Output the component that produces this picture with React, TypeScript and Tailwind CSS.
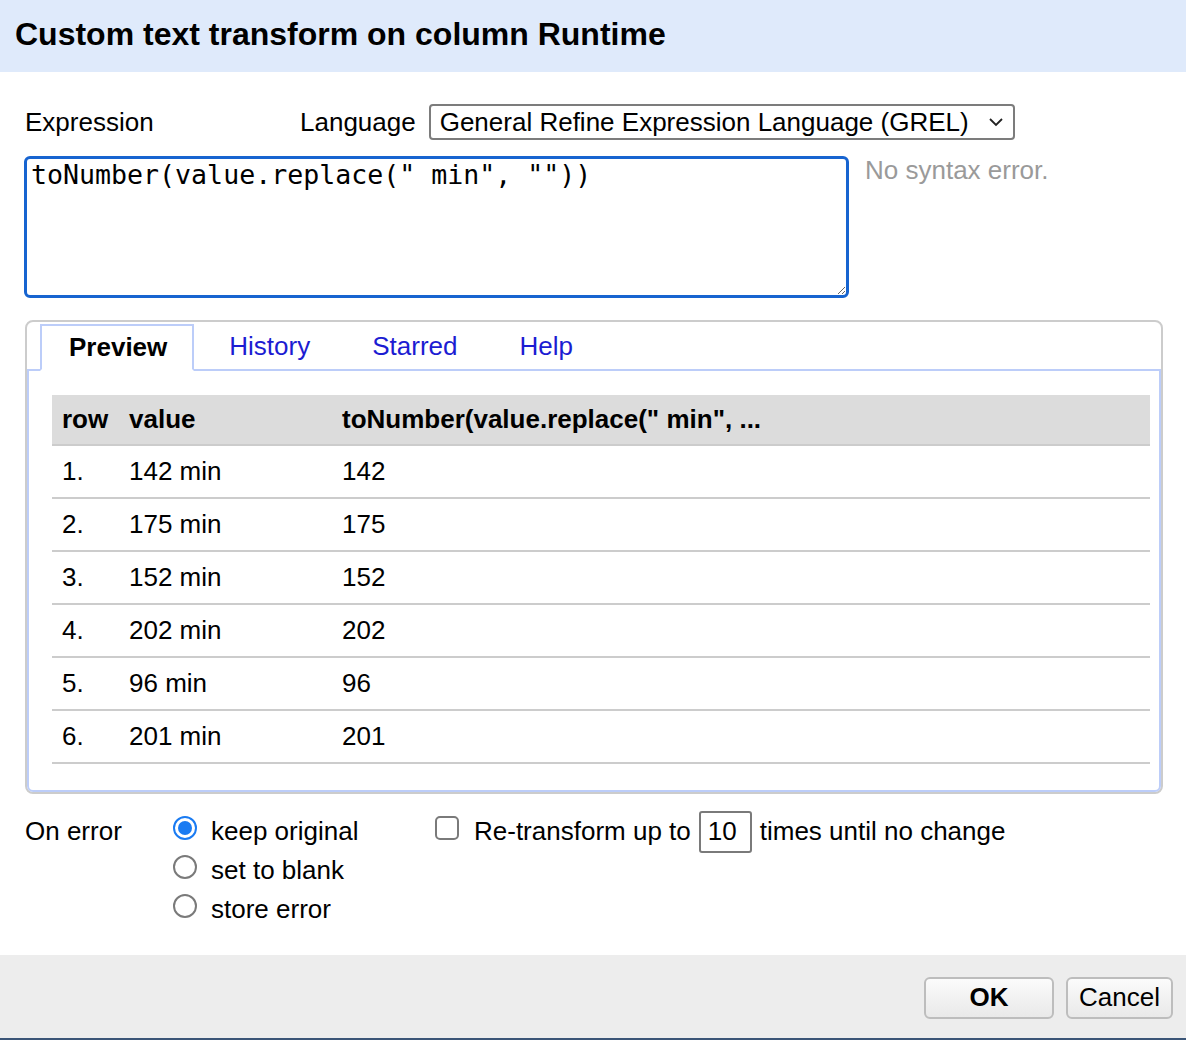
import React from "react";

const rows = [
  ["1.", "142 min", "142"],
  ["2.", "175 min", "175"],
  ["3.", "152 min", "152"],
  ["4.", "202 min", "202"],
  ["5.", "96 min", "96"],
  ["6.", "201 min", "201"],
];

function Radio({ checked }: { checked?: boolean }) {
  return checked ? (
    <div className="w-[24px] h-[24px] rounded-full border-[2px] border-[#1a7bf2] bg-white flex items-center justify-center shrink-0">
      <div className="w-[14px] h-[14px] rounded-full bg-[#1a7bf2]" />
    </div>
  ) : (
    <div className="w-[24px] h-[24px] rounded-full border-[2px] border-[#7a7a7a] bg-white shrink-0" />
  );
}

export default function App() {
  return (
    <div className="w-[1186px] h-[1040px] flex flex-col bg-white text-black font-['Liberation_Sans',Arial,sans-serif] text-[26px]">
      <div className="h-[72px] bg-[#dfeafb] flex items-center px-[15px] pb-[4px]">
        <h1 className="font-bold text-[32px] leading-none">Custom text transform on column Runtime</h1>
      </div>

      <div className="flex-1 flex flex-col px-[25px] pt-[32px]">
        <div className="flex items-center h-[36px]">
          <div className="w-[275px]">Expression</div>
          <div className="mr-[13px]">Language</div>
          <div className="w-[586px] h-[36px] border-[2px] border-[#7c7c7c] rounded-[4px] flex items-center pl-[9px] pr-[8px] justify-between">
            <span>General Refine Expression Language (GREL)</span>
            <svg width="18" height="12" viewBox="0 0 18 12" className="shrink-0">
              <path d="M3 3 L9 9 L15 3" stroke="#222" strokeWidth="1.8" fill="none" />
            </svg>
          </div>
        </div>

        <div className="flex mt-[16px]">
          <textarea
            readOnly
            value={'toNumber(value.replace(" min", ""))'}
            className="-ml-px w-[825px] h-[142px] border-[3px] border-[#1764d0] rounded-[6px] outline-none pl-[4px] pr-[5px] py-[1px] font-['DejaVu_Sans_Mono',monospace] text-[26.6px] leading-[30px] resize"
          />
          <div className="ml-[16px] -mt-[1px] text-[#9a9a9a] leading-[30px]">No syntax error.</div>
        </div>

        <div className="mt-[22px] w-[1138px] border-[2px] border-[#cccccc] rounded-[8px] flex flex-col">
          <div className="flex items-end pl-[13px] gap-[6px] h-[47px] relative z-10">
            <div className="h-[47px] -mb-[2px] border-[2px] border-[#bccdf9] border-b-white bg-white pl-[27px] pr-[25px] flex items-center font-bold">Preview</div>
            <div className="h-[45px] pl-[29px] pr-[27px] flex items-center text-[#1c1cd2]">History</div>
            <div className="h-[45px] pl-[29px] pr-[27px] flex items-center text-[#1c1cd2]">Starred</div>
            <div className="h-[45px] pl-[29px] pr-[27px] flex items-center text-[#1c1cd2]">Help</div>
          </div>
          <div className="border-[2px] border-[#bccdf9] rounded-b-[6px] pl-[23px] pr-[9px] pt-[24px] pb-[26px]">
            <table className="w-full border-collapse">
              <thead>
                <tr className="bg-[#dcdcdc] h-[50px] border-b-[2px] border-[#cccccc]">
                  <th className="w-[67px] text-left font-bold pl-[10px]">row</th>
                  <th className="w-[213px] text-left font-bold pl-[10px]">value</th>
                  <th className="text-left font-bold pl-[10px]">toNumber(value.replace(" min", ...</th>
                </tr>
              </thead>
              <tbody>
                {rows.map((r) => (
                  <tr key={r[0]} className="h-[53px] border-b-[2px] border-[#cccccc]">
                    <td className="pl-[10px]">{r[0]}</td>
                    <td className="pl-[10px]">{r[1]}</td>
                    <td className="pl-[10px]">{r[2]}</td>
                  </tr>
                ))}
              </tbody>
            </table>
          </div>
        </div>

        <div className="flex mt-[18px]">
          <div className="w-[148px] h-[39px] flex items-center">On error</div>
          <div className="w-[262px] flex flex-col">
            <div className="h-[39px] flex items-center gap-[14px]">
              <div className="-mt-[8px]"><Radio checked /></div>
              <span>keep original</span>
            </div>
            <div className="h-[39px] flex items-center gap-[14px]">
              <div className="-mt-[8px]"><Radio /></div>
              <span>set to blank</span>
            </div>
            <div className="h-[39px] flex items-center gap-[14px]">
              <div className="-mt-[8px]"><Radio /></div>
              <span>store error</span>
            </div>
          </div>
          <div className="h-[39px] flex items-center">
            <div className="w-[24px] h-[24px] border-[2px] border-[#7a7a7a] rounded-[5px] -mt-[8px] mr-[15px] shrink-0" />
            <span>Re-transform up to</span>
            <div className="ml-[8px] mr-[8px] w-[53px] h-[42px] border-[2px] border-[#7a7a7a] rounded-[3px] flex items-center pl-[7px]">10</div>
            <span>times until no change</span>
          </div>
        </div>
      </div>

      <div className="h-[85px] bg-[#ededed] border-b-[2px] border-[#3b5577] flex items-center justify-end gap-[12px] pr-[13px] pt-[2px]">
        <div className="w-[130px] h-[42px] border-[2px] border-[#bdbdbd] rounded-[6px] bg-gradient-to-b from-[#fbfbfb] to-[#e9e9e9] flex items-center justify-center font-bold">OK</div>
        <div className="w-[107px] h-[42px] border-[2px] border-[#bdbdbd] rounded-[6px] bg-gradient-to-b from-[#fbfbfb] to-[#e9e9e9] flex items-center justify-center">Cancel</div>
      </div>
    </div>
  );
}
